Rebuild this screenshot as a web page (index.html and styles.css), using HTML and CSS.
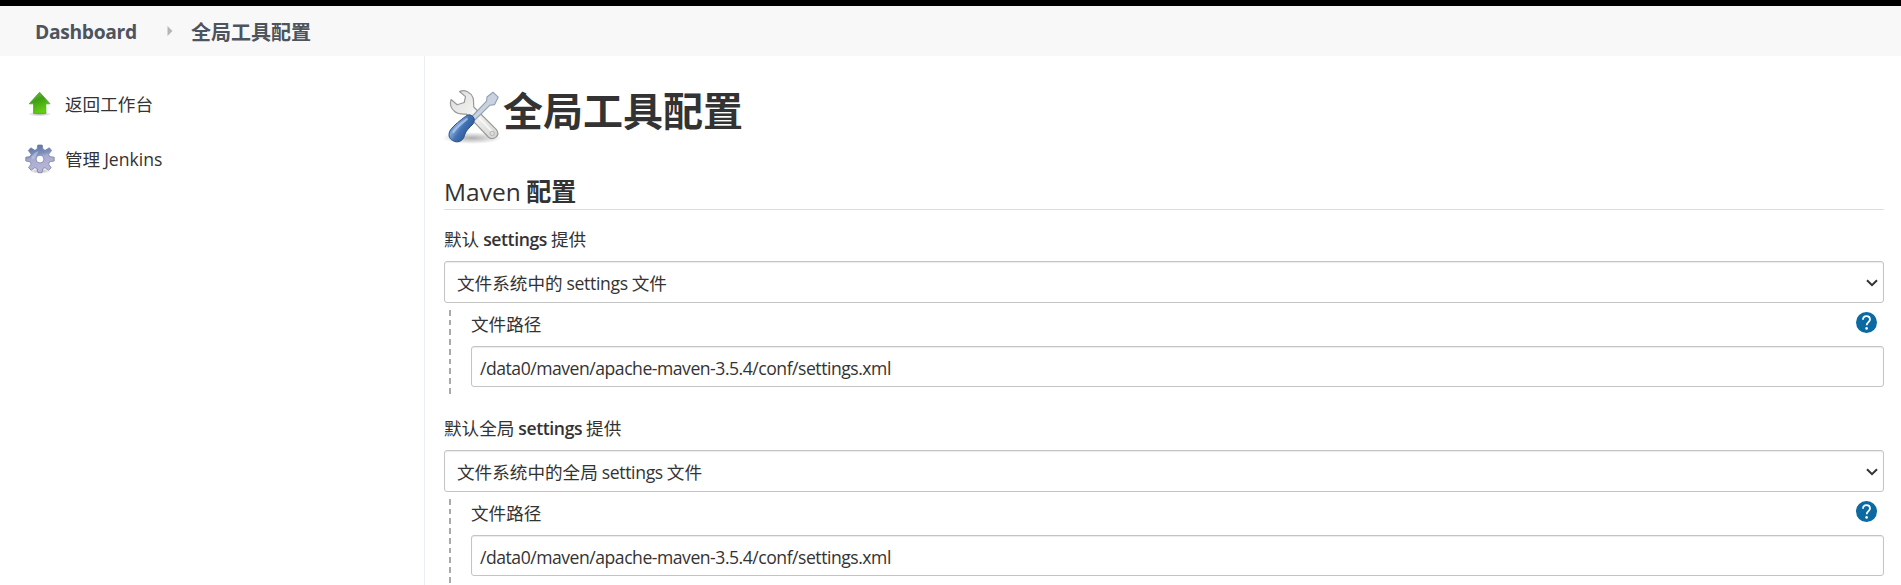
FILE: index.html
```html
<!DOCTYPE html>
<html lang="zh-CN">
<head>
<meta charset="utf-8">
<title>全局工具配置 [Jenkins]</title>
<link rel="stylesheet" href="styles.css">
</head>
<body>
<div class="topbar"></div>
<nav class="breadcrumbs">
  <a class="crumb crumb-home">Dashboard</a>
  <svg class="crumb-arrow" width="6" height="10" viewBox="0 0 6 10"><path d="M0.5 0v10L5.5 5z" fill="#b5b5b5"/></svg>
  <a class="crumb crumb-page">全局工具配置</a>
</nav>
<div class="page">
  <aside class="side">
    <a class="task">
      <svg class="task-icon" viewBox="0 0 30 30">
        <defs>
          <linearGradient id="green" x1="0" y1="0" x2="0.4" y2="1"><stop offset="0" stop-color="#73c74a"/><stop offset=".45" stop-color="#3f9f12"/><stop offset="1" stop-color="#63cf12"/></linearGradient>
          <radialGradient id="shade"><stop offset="0" stop-color="#777" stop-opacity=".6"/><stop offset="1" stop-color="#777" stop-opacity="0"/></radialGradient>
        </defs>
        <ellipse cx="14.7" cy="25" rx="12" ry="2.4" fill="url(#shade)"/>
        <path d="M14.6 3.2L25 14.8H20.8V24.4H8.6V14.8H4.2z" fill="url(#green)" stroke="#55a832" stroke-width=".9" stroke-linejoin="round"/>
      </svg>
      <span>返回工作台</span>
    </a>
    <a class="task">
      <svg class="task-icon" viewBox="0 0 30 30">
        <defs><linearGradient id="gear" x1="0" y1="0" x2=".25" y2="1"><stop offset="0" stop-color="#526f9f"/><stop offset=".42" stop-color="#7f91bd"/><stop offset=".52" stop-color="#a8abd0"/><stop offset="1" stop-color="#b7b5d7"/></linearGradient></defs>
        <ellipse cx="15" cy="27" rx="11" ry="2.7" fill="url(#shade)"/>
        <path fill-rule="evenodd" fill="url(#gear)" stroke="#7882a3" stroke-width=".8" stroke-linejoin="round" d="M12.8 1H17.2L18 5.3L20.2 6.3L24.3 3.8L26.6 6.6L23.7 10.2L24.6 12.6L29.2 13.2V17L24.6 17.8L23.6 20.2L26.2 23.8L23.5 26.2L20 23.7L17.8 24.6L17 28.7H13L12.1 24.6L9.8 23.7L6.2 26.2L3.5 23.7L6.1 20.1L5.1 17.8L.8 17V13.2L5.2 12.6L6.2 10.2L3.3 6.6L5.8 3.8L9.8 6.3L12 5.3zM15 11.2a3.9 3.9 0 1 0 0 7.8a3.9 3.9 0 1 0 0-7.8z"/>
        <path d="M6 13.5Q9.5 7.5 13.5 7.3Q12 12 8 15.5z" fill="#d0d7eb" opacity=".5"/>
      </svg>
      <span>管理 <span class="latin medium">Jenkins</span></span>
    </a>
  </aside>
  <main class="main">
    <h1 class="title">
      <svg class="tools" viewBox="0 0 60 60">
        <defs>
          <linearGradient id="steel" x1="0" y1="0" x2="1" y2="1"><stop offset="0" stop-color="#d9dad9"/><stop offset=".5" stop-color="#f4f4f3"/><stop offset="1" stop-color="#d2d3d1"/></linearGradient>
          <linearGradient id="handle" x1="0" y1="0" x2="1" y2=".7"><stop offset="0" stop-color="#315d9d"/><stop offset=".38" stop-color="#7da5d9"/><stop offset=".58" stop-color="#4270b0"/><stop offset="1" stop-color="#24508f"/></linearGradient>
        </defs>
        <ellipse cx="29" cy="53" rx="30" ry="6" fill="url(#shade)"/>
        <path d="M16.5 6.5C22 4.2 28 7.4 30 12.8C31 15.8 30.4 19 30.8 22L53.2 44.4C58 50.5 50.4 56.3 45.3 52L23.6 29.2C18.8 29 15.6 29.8 11.7 26.5C7.8 23.3 6.5 19 8.1 14.5L14.2 19.8L21.2 17.5L22.5 11.6z" fill="url(#steel)" stroke="#999b98" stroke-width="1.2" stroke-linejoin="round"/>
        <path d="M29.5 26L49.5 47" stroke="#fff" stroke-width="2" opacity=".65"/>
        <circle cx="49.2" cy="48.4" r="2.2" fill="#dedede" stroke="#aaa" stroke-width=".8"/>
        <path d="M43.6 16.2L44 12L50 7.2L55.2 12.2L51.6 19.6L47 20.2L31.8 35.2L28.4 32z" fill="#c9d2e0" stroke="#929eaf" stroke-width="1.1" stroke-linejoin="round"/>
        <path d="M28.5 30.5C31.7 32.3 32.1 35.9 29.9 39C26.9 42.4 22.8 45.5 21.5 50.2C20.4 56.4 13.8 58.5 9.8 55.5C5.5 53.6 5 48.8 7.6 44.8C11.3 39.8 17.8 35 22.5 31.4C24.5 29.7 26.6 29.4 28.5 30.5z" fill="url(#handle)" stroke="#244c88" stroke-width="1"/>
        <path d="M10.5 47C13.8 41.5 19.5 37.7 23.8 34.2" fill="none" stroke="#b4cced" stroke-width="2.2" stroke-linecap="round" opacity=".75"/>
      </svg>
      <span>全局工具配置</span>
    </h1>
    <h2 class="section"><span class="latin maven">Maven</span> <b>配置</b></h2>

    <section class="setting">
      <div class="label">默认 <span class="latin strong">settings</span> 提供</div>
      <div class="select"><span>文件系统中的 <span class="latin light">settings</span> 文件</span>
        <svg class="chevron" width="12" height="8" viewBox="0 0 12 8"><path d="M1 1.2L6 6.2L11 1.2" fill="none" stroke="#333" stroke-width="2"/></svg>
      </div>
      <div class="nested">
        <div class="nested-head"><span>文件路径</span>
          <svg class="help" width="21" height="21" viewBox="0 0 21 21"><circle cx="10.5" cy="10.5" r="10.5" fill="#0b6aa2"/><path d="M7 7.8C7 5.4 8.4 4.2 10.5 4.2S14 5.5 14 7.6C14 10 10.7 10.2 10.7 13.2" fill="none" stroke="#fff" stroke-width="1.8"/><circle cx="10.6" cy="16.4" r="1.3" fill="#fff"/></svg>
        </div>
        <div class="input"><span class="latin path">/data0/maven/apache-maven-3.5.4/conf/settings.xml</span></div>
      </div>
    </section>

    <section class="setting">
      <div class="label">默认全局 <span class="latin strong">settings</span> 提供</div>
      <div class="select"><span>文件系统中的全局 <span class="latin light">settings</span> 文件</span>
        <svg class="chevron" width="12" height="8" viewBox="0 0 12 8"><path d="M1 1.2L6 6.2L11 1.2" fill="none" stroke="#333" stroke-width="2"/></svg>
      </div>
      <div class="nested">
        <div class="nested-head"><span>文件路径</span>
          <svg class="help" width="21" height="21" viewBox="0 0 21 21"><circle cx="10.5" cy="10.5" r="10.5" fill="#0b6aa2"/><path d="M7 7.8C7 5.4 8.4 4.2 10.5 4.2S14 5.5 14 7.6C14 10 10.7 10.2 10.7 13.2" fill="none" stroke="#fff" stroke-width="1.8"/><circle cx="10.6" cy="16.4" r="1.3" fill="#fff"/></svg>
        </div>
        <div class="input"><span class="latin path">/data0/maven/apache-maven-3.5.4/conf/settings.xml</span></div>
      </div>
    </section>
  </main>
</div>
</body>
</html>
```
FILE: styles.css
```css
* { box-sizing: border-box; }
html, body { height: 100%; }
body {
  margin: 0;
  overflow: hidden;
  display: flex;
  flex-direction: column;
  background: #fff;
  color: #333;
  font: 400 17.6px/24px "Noto Sans CJK SC", "Noto Sans", sans-serif;
  white-space: nowrap;
}
svg { display: block; flex: none; }
.latin { font-family: "Open Sans", "Noto Sans", sans-serif; }
.topbar { height: 6px; flex: none; background: #000; }
.breadcrumbs {
  height: 50px;
  flex: none;
  display: flex;
  align-items: center;
  padding-left: 35px;
  background: #f8f8f8;
  color: #4d545d;
  font-weight: 700;
}
.crumb-home { width: 101px; font-family: "Open Sans", "Noto Sans", sans-serif; font-size: 19.3px; letter-spacing: -0.35px; padding-top: 2px; }
.crumb-arrow { margin-left: 31px; }
.crumb-page { margin-left: 18px; padding-top: 2px; font-size: 20px; }
.page { flex: 1; display: flex; min-height: 0; }
.side {
  width: 425px;
  flex: none;
  border-right: 1px solid #eaeff2;
  padding: 33px 0 0 25px;
  display: flex;
  flex-direction: column;
  gap: 25px;
}
.task { display: flex; align-items: center; gap: 10px; height: 30px; }
.task-icon { width: 30px; height: 30px; }
.main { flex: 1; min-width: 0; padding: 25px 17px 0 19px; }
.title {
  display: flex;
  align-items: flex-start;
  height: 60px;
  margin: 0;
  font-size: 40px;
  line-height: 57px;
  font-weight: 700;
}
.tools { width: 60px; height: 60px; margin: 4px 0 0 -1px; }
.section {
  height: 40px;
  margin: 29px 0 17px;
  border-bottom: 1px solid #dedede;
  font-size: 25px;
  line-height: 40px;
  font-weight: 500;
}
.section b { font-weight: 700; }
.maven { font-size: 24.5px; }
.strong { font-weight: 600; letter-spacing: -0.4px; }
.medium { font-weight: 500; }
.light { letter-spacing: -0.35px; }
.setting { height: 189px; }
.label { height: 34px; line-height: 24px; }
.select {
  height: 42px;
  display: flex;
  align-items: center;
  justify-content: space-between;
  padding: 1px 5px 0 12px;
  border: 1px solid #c4c4c4;
  border-radius: 3px;
  box-shadow: inset 0 1px 1px rgba(0, 0, 0, .08);
}
.nested {
  height: 84px;
  margin: 7px 0 0 5px;
  padding-left: 22px;
  background: repeating-linear-gradient(to bottom, #aaa 0 5.7px, transparent 5.7px 9.75px) left top / 2px 100% no-repeat;
}
.nested-head { height: 36px; display: flex; justify-content: space-between; padding: 2px 7px 0 0; }
.input {
  height: 41px;
  display: flex;
  align-items: center;
  padding: 2px 0 0 8px;
  border: 1px solid #c4c4c4;
  border-radius: 3px;
  box-shadow: inset 0 1px 1px rgba(0, 0, 0, .08);
}
.path { letter-spacing: -0.48px; }
```
